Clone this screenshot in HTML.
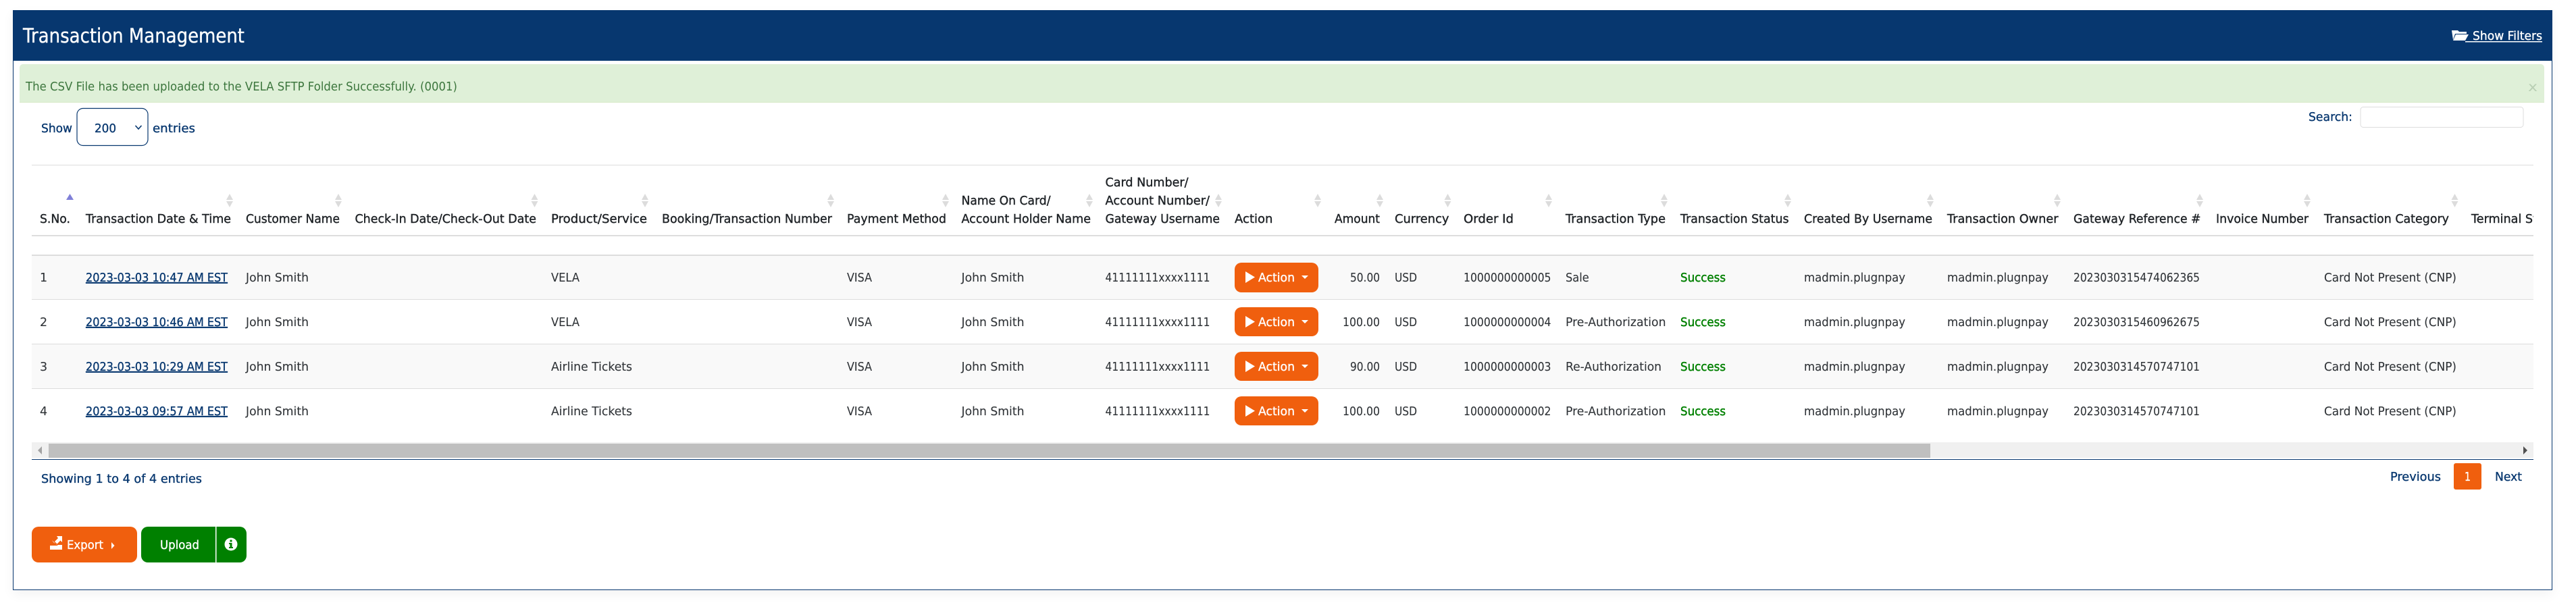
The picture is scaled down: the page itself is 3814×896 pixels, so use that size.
<!DOCTYPE html>
<html lang="en">
<head>
<meta charset="utf-8">
<title>Transaction Management</title>
<style>
html,body{margin:0;padding:0;background:#fff;width:3814px;height:896px;overflow:hidden}
#panel{position:absolute;left:19px;top:15px;width:3758px;height:858px;border:1px solid #07376f;border-top:0;box-shadow:0 6px 16px rgba(0,0,0,.05);background:#fff}
svg{position:absolute;left:0;top:0}
text{font-family:"DejaVu Sans","Liberation Sans",sans-serif;font-size:17.5px;white-space:pre}
.h text{fill:#1f2327;stroke:#1f2327;stroke-width:.4}
.d text{fill:#2f3337;stroke:#2f3337;stroke-width:.1}
.n,.d text.n{fill:#07376f;stroke:#07376f;stroke-width:.35}
.w{fill:#fff;stroke:#fff;stroke-width:.35}
.g,.d text.g{fill:#008000;stroke:#008000;stroke-width:.45}
</style>
</head>
<body>
<div id="panel"></div>
<svg width="3814" height="896" viewBox="0 0 3814 896" xmlns="http://www.w3.org/2000/svg">
<defs><clipPath id="c"><rect x="47" y="244" width="3704" height="420"/></clipPath></defs>

<!-- header bar -->
<rect x="19" y="15" width="3760" height="75" fill="#07376f"/>
<text class="w" x="34" y="63" style="font-size:29px" textLength="328" lengthAdjust="spacingAndGlyphs">Transaction Management</text>
<path d="M3630 45h9l2 2h11v3h-17l-3 9zM3636 51h19l-5 9h-18z" fill="#fff"/>
<text class="w" x="3661" y="59" textLength="103" lengthAdjust="spacingAndGlyphs">Show Filters</text>
<rect x="3650" y="61" width="114" height="1.5" fill="#fff"/>

<!-- alert -->
<path d="M29 152V100a5 5 0 0 1 5-5H3762a5 5 0 0 1 5 5V152z" fill="#dff0d8"/>
<rect x="29" y="151" width="3738" height="1" fill="#d6e9c6"/>
<text x="38" y="134" fill="#3c763d" textLength="639" lengthAdjust="spacingAndGlyphs">The CSV File has been uploaded to the VELA SFTP Folder Successfully. (0001)</text>
<text x="3743" y="135" fill="#b9cfb4" style="font-size:19px" textLength="14" lengthAdjust="spacingAndGlyphs">x</text>

<!-- length & search -->
<text class="n" x="61" y="196" textLength="46" lengthAdjust="spacingAndGlyphs">Show</text>
<rect x="114" y="160.500" width="105" height="55" rx="9" fill="#fff" stroke="#07376f" stroke-width="1.200"/>
<text class="n" x="140" y="196" textLength="32" lengthAdjust="spacingAndGlyphs">200</text>
<path d="M200.500 186l4.500 5 4.500-5" fill="none" stroke="#07376f" stroke-width="1.600"/>
<text class="n" x="226" y="196" textLength="63" lengthAdjust="spacingAndGlyphs">entries</text>
<text class="n" x="3418" y="179" textLength="65" lengthAdjust="spacingAndGlyphs">Search:</text>
<rect x="3495" y="158.500" width="241" height="30" rx="4" fill="#fff" stroke="#ddd"/>

<!-- table rules and stripes -->
<rect x="47" y="379" width="3704" height="64" fill="#f9f9f9"/>
<rect x="47" y="509" width="3704" height="66" fill="#f9f9f9"/>
<rect x="47" y="244" width="3704" height="1" fill="#ddd"/>
<rect x="47" y="348" width="3704" height="2" fill="#ddd"/>
<rect x="47" y="377" width="3704" height="2" fill="#ddd"/>
<rect x="47" y="443" width="3704" height="1" fill="#ddd"/>
<rect x="47" y="509" width="3704" height="1" fill="#ddd"/>
<rect x="47" y="575" width="3704" height="1" fill="#ddd"/>

<!-- sort arrows -->
<path fill="#dcdcdc" d="
M340 287l5 9h-10zM340 307l5-9h-10z
M501 287l5 9h-10zM501 307l5-9h-10z
M791.500 287l5 9h-10zM791.500 307l5-9h-10z
M955 287l5 9h-10zM955 307l5-9h-10z
M1230 287l5 9h-10zM1230 307l5-9h-10z
M1400 287l5 9h-10zM1400 307l5-9h-10z
M1613 287l5 9h-10zM1613 307l5-9h-10z
M1804 287l5 9h-10zM1804 307l5-9h-10z
M1951 287l5 9h-10zM1951 307l5-9h-10z
M2043 287l5 9h-10zM2043 307l5-9h-10z
M2143.500 287l5 9h-10zM2143.500 307l5-9h-10z
M2293 287l5 9h-10zM2293 307l5-9h-10z
M2464 287l5 9h-10zM2464 307l5-9h-10z
M2647 287l5 9h-10zM2647 307l5-9h-10z
M2858 287l5 9h-10zM2858 307l5-9h-10z
M3046 287l5 9h-10zM3046 307l5-9h-10z
M3257 287l5 9h-10zM3257 307l5-9h-10z
M3416 287l5 9h-10zM3416 307l5-9h-10z
M3634.500 287l5 9h-10zM3634.500 307l5-9h-10z"/>
<path d="M103.500 287l5.500 9h-11z" fill="#8080d8"/>

<!-- table headings -->
<g class="h" clip-path="url(#c)">
<text x="59" y="330" textLength="45" lengthAdjust="spacingAndGlyphs">S.No.</text>
<text x="127" y="330" textLength="215" lengthAdjust="spacingAndGlyphs">Transaction Date &amp; Time</text>
<text x="364" y="330" textLength="139" lengthAdjust="spacingAndGlyphs">Customer Name</text>
<text x="525.500" y="330" textLength="268.500" lengthAdjust="spacingAndGlyphs">Check-In Date/Check-Out Date</text>
<text x="816" y="330" textLength="142" lengthAdjust="spacingAndGlyphs">Product/Service</text>
<text x="980" y="330" textLength="252" lengthAdjust="spacingAndGlyphs">Booking/Transaction Number</text>
<text x="1254" y="330" textLength="147" lengthAdjust="spacingAndGlyphs">Payment Method</text>
<text x="1423.500" y="303" textLength="132" lengthAdjust="spacingAndGlyphs">Name On Card/</text>
<text x="1423.500" y="330" textLength="191.500" lengthAdjust="spacingAndGlyphs">Account Holder Name</text>
<text x="1636.500" y="276" textLength="123" lengthAdjust="spacingAndGlyphs">Card Number/</text>
<text x="1636.500" y="303" textLength="154.500" lengthAdjust="spacingAndGlyphs">Account Number/</text>
<text x="1636.500" y="330" textLength="169.500" lengthAdjust="spacingAndGlyphs">Gateway Username</text>
<text x="1828" y="330" textLength="56.500" lengthAdjust="spacingAndGlyphs">Action</text>
<text x="1976" y="330" textLength="67" lengthAdjust="spacingAndGlyphs">Amount</text>
<text x="2065" y="330" textLength="80.500" lengthAdjust="spacingAndGlyphs">Currency</text>
<text x="2167" y="330" textLength="74" lengthAdjust="spacingAndGlyphs">Order Id</text>
<text x="2318" y="330" textLength="148" lengthAdjust="spacingAndGlyphs">Transaction Type</text>
<text x="2488" y="330" textLength="160.600" lengthAdjust="spacingAndGlyphs">Transaction Status</text>
<text x="2671" y="330" textLength="190" lengthAdjust="spacingAndGlyphs">Created By Username</text>
<text x="2883" y="330" textLength="164.500" lengthAdjust="spacingAndGlyphs">Transaction Owner</text>
<text x="3070" y="330" textLength="188.500" lengthAdjust="spacingAndGlyphs">Gateway Reference #</text>
<text x="3281" y="330" textLength="137" lengthAdjust="spacingAndGlyphs">Invoice Number</text>
<text x="3441" y="330" textLength="185" lengthAdjust="spacingAndGlyphs">Transaction Category</text>
<text x="3659" y="330" textLength="136" lengthAdjust="spacingAndGlyphs">Terminal Status</text>
</g>

<!-- row 1 -->
<g class="d">
<text x="59" y="417">1</text>
<text class="n" x="127" y="417" textLength="210" lengthAdjust="spacingAndGlyphs" text-decoration="underline">2023-03-03 10:47 AM EST</text>
<text x="364" y="417" textLength="93" lengthAdjust="spacingAndGlyphs">John Smith</text>
<text x="816" y="417" textLength="42" lengthAdjust="spacingAndGlyphs">VELA</text>
<text x="1254" y="417" textLength="37" lengthAdjust="spacingAndGlyphs">VISA</text>
<text x="1423.500" y="417" textLength="93" lengthAdjust="spacingAndGlyphs">John Smith</text>
<text x="1636.500" y="417" textLength="155" lengthAdjust="spacingAndGlyphs">41111111xxxx1111</text>
<text x="1999" y="417" textLength="44" lengthAdjust="spacingAndGlyphs">50.00</text>
<text x="2065" y="417" textLength="33" lengthAdjust="spacingAndGlyphs">USD</text>
<text x="2167" y="417" textLength="129.500" lengthAdjust="spacingAndGlyphs">1000000000005</text>
<text x="2318" y="417" textLength="34.700" lengthAdjust="spacingAndGlyphs">Sale</text>
<text class="g" x="2488" y="417" textLength="67" lengthAdjust="spacingAndGlyphs">Success</text>
<text x="2671" y="417" textLength="150" lengthAdjust="spacingAndGlyphs">madmin.plugnpay</text>
<text x="2883" y="417" textLength="150" lengthAdjust="spacingAndGlyphs">madmin.plugnpay</text>
<text x="3070" y="417" textLength="187" lengthAdjust="spacingAndGlyphs">2023030315474062365</text>
<text x="3441" y="417" textLength="196" lengthAdjust="spacingAndGlyphs">Card Not Present (CNP)</text>
</g>
<!-- row 2 -->
<g class="d">
<text x="59" y="483">2</text>
<text class="n" x="127" y="483" textLength="210" lengthAdjust="spacingAndGlyphs" text-decoration="underline">2023-03-03 10:46 AM EST</text>
<text x="364" y="483" textLength="93" lengthAdjust="spacingAndGlyphs">John Smith</text>
<text x="816" y="483" textLength="42" lengthAdjust="spacingAndGlyphs">VELA</text>
<text x="1254" y="483" textLength="37" lengthAdjust="spacingAndGlyphs">VISA</text>
<text x="1423.500" y="483" textLength="93" lengthAdjust="spacingAndGlyphs">John Smith</text>
<text x="1636.500" y="483" textLength="155" lengthAdjust="spacingAndGlyphs">41111111xxxx1111</text>
<text x="1988" y="483" textLength="55" lengthAdjust="spacingAndGlyphs">100.00</text>
<text x="2065" y="483" textLength="33" lengthAdjust="spacingAndGlyphs">USD</text>
<text x="2167" y="483" textLength="129.500" lengthAdjust="spacingAndGlyphs">1000000000004</text>
<text x="2318" y="483" textLength="148.500" lengthAdjust="spacingAndGlyphs">Pre-Authorization</text>
<text class="g" x="2488" y="483" textLength="67" lengthAdjust="spacingAndGlyphs">Success</text>
<text x="2671" y="483" textLength="150" lengthAdjust="spacingAndGlyphs">madmin.plugnpay</text>
<text x="2883" y="483" textLength="150" lengthAdjust="spacingAndGlyphs">madmin.plugnpay</text>
<text x="3070" y="483" textLength="187" lengthAdjust="spacingAndGlyphs">2023030315460962675</text>
<text x="3441" y="483" textLength="196" lengthAdjust="spacingAndGlyphs">Card Not Present (CNP)</text>
</g>
<!-- row 3 -->
<g class="d">
<text x="59" y="549">3</text>
<text class="n" x="127" y="549" textLength="210" lengthAdjust="spacingAndGlyphs" text-decoration="underline">2023-03-03 10:29 AM EST</text>
<text x="364" y="549" textLength="93" lengthAdjust="spacingAndGlyphs">John Smith</text>
<text x="816" y="549" textLength="120" lengthAdjust="spacingAndGlyphs">Airline Tickets</text>
<text x="1254" y="549" textLength="37" lengthAdjust="spacingAndGlyphs">VISA</text>
<text x="1423.500" y="549" textLength="93" lengthAdjust="spacingAndGlyphs">John Smith</text>
<text x="1636.500" y="549" textLength="155" lengthAdjust="spacingAndGlyphs">41111111xxxx1111</text>
<text x="1999" y="549" textLength="44" lengthAdjust="spacingAndGlyphs">90.00</text>
<text x="2065" y="549" textLength="33" lengthAdjust="spacingAndGlyphs">USD</text>
<text x="2167" y="549" textLength="129.500" lengthAdjust="spacingAndGlyphs">1000000000003</text>
<text x="2318" y="549" textLength="142" lengthAdjust="spacingAndGlyphs">Re-Authorization</text>
<text class="g" x="2488" y="549" textLength="67" lengthAdjust="spacingAndGlyphs">Success</text>
<text x="2671" y="549" textLength="150" lengthAdjust="spacingAndGlyphs">madmin.plugnpay</text>
<text x="2883" y="549" textLength="150" lengthAdjust="spacingAndGlyphs">madmin.plugnpay</text>
<text x="3070" y="549" textLength="187" lengthAdjust="spacingAndGlyphs">2023030314570747101</text>
<text x="3441" y="549" textLength="196" lengthAdjust="spacingAndGlyphs">Card Not Present (CNP)</text>
</g>
<!-- row 4 -->
<g class="d">
<text x="59" y="615">4</text>
<text class="n" x="127" y="615" textLength="210" lengthAdjust="spacingAndGlyphs" text-decoration="underline">2023-03-03 09:57 AM EST</text>
<text x="364" y="615" textLength="93" lengthAdjust="spacingAndGlyphs">John Smith</text>
<text x="816" y="615" textLength="120" lengthAdjust="spacingAndGlyphs">Airline Tickets</text>
<text x="1254" y="615" textLength="37" lengthAdjust="spacingAndGlyphs">VISA</text>
<text x="1423.500" y="615" textLength="93" lengthAdjust="spacingAndGlyphs">John Smith</text>
<text x="1636.500" y="615" textLength="155" lengthAdjust="spacingAndGlyphs">41111111xxxx1111</text>
<text x="1988" y="615" textLength="55" lengthAdjust="spacingAndGlyphs">100.00</text>
<text x="2065" y="615" textLength="33" lengthAdjust="spacingAndGlyphs">USD</text>
<text x="2167" y="615" textLength="129.500" lengthAdjust="spacingAndGlyphs">1000000000002</text>
<text x="2318" y="615" textLength="148.500" lengthAdjust="spacingAndGlyphs">Pre-Authorization</text>
<text class="g" x="2488" y="615" textLength="67" lengthAdjust="spacingAndGlyphs">Success</text>
<text x="2671" y="615" textLength="150" lengthAdjust="spacingAndGlyphs">madmin.plugnpay</text>
<text x="2883" y="615" textLength="150" lengthAdjust="spacingAndGlyphs">madmin.plugnpay</text>
<text x="3070" y="615" textLength="187" lengthAdjust="spacingAndGlyphs">2023030314570747101</text>
<text x="3441" y="615" textLength="196" lengthAdjust="spacingAndGlyphs">Card Not Present (CNP)</text>
</g>

<!-- action buttons -->
<rect x="1828" y="389" width="124" height="44" rx="10" fill="#f05f0e"/>
<path d="M1844 402l14 8.500-14 8.500zM1927 408h10l-5 5z" fill="#fff"/>
<text class="w" x="1863" y="417" textLength="54" lengthAdjust="spacingAndGlyphs">Action</text>
<rect x="1828" y="455" width="124" height="43" rx="10" fill="#f05f0e"/>
<path d="M1844 468l14 8.500-14 8.500zM1927 474h10l-5 5z" fill="#fff"/>
<text class="w" x="1863" y="483" textLength="54" lengthAdjust="spacingAndGlyphs">Action</text>
<rect x="1828" y="521" width="124" height="43" rx="10" fill="#f05f0e"/>
<path d="M1844 534l14 8.500-14 8.500zM1927 540h10l-5 5z" fill="#fff"/>
<text class="w" x="1863" y="549" textLength="54" lengthAdjust="spacingAndGlyphs">Action</text>
<rect x="1828" y="587" width="124" height="43" rx="10" fill="#f05f0e"/>
<path d="M1844 600l14 8.500-14 8.500zM1927 606h10l-5 5z" fill="#fff"/>
<text class="w" x="1863" y="615" textLength="54" lengthAdjust="spacingAndGlyphs">Action</text>

<!-- scrollbar -->
<rect x="47" y="655" width="3704" height="23" fill="#f0f0f0"/>
<rect x="72" y="657" width="2786" height="21" fill="#bfbfbf"/>
<path d="M3736 661v12l6-6z" fill="#505050"/>
<path d="M62 661v12l-6-6z" fill="#a3a3a3"/>
<rect x="47" y="680" width="3704" height="1" fill="#07376f"/>

<!-- footer of table -->
<text class="n" x="61" y="715" textLength="238" lengthAdjust="spacingAndGlyphs">Showing 1 to 4 of 4 entries</text>
<text class="n" x="3539" y="712" textLength="75" lengthAdjust="spacingAndGlyphs">Previous</text>
<rect x="3633" y="686" width="41" height="39" rx="3" fill="#f05f0e"/>
<text class="w" x="3649" y="712" textLength="9" lengthAdjust="spacingAndGlyphs">1</text>
<text class="n" x="3694" y="712" textLength="40" lengthAdjust="spacingAndGlyphs">Next</text>

<!-- bottom buttons -->
<rect x="47" y="780" width="156" height="53" rx="10" fill="#f05f0e"/>
<path d="M84 794h8v9l-2.500-2.500-5 5-3.500-3.500 5-5zM77 800l7 7h8v3H74v-2h12l-7-5zM74 810h18v4H74z" fill="#fff"/>
<text class="w" x="99" y="813" textLength="54" lengthAdjust="spacingAndGlyphs">Export</text>
<path d="M165 803l4.500 5-4.500 5z" fill="#fff"/>
<path d="M219 780h100v53H219a10 10 0 0 1-10-10V790a10 10 0 0 1 10-10z" fill="#008000"/>
<text class="w" x="237" y="813" textLength="58" lengthAdjust="spacingAndGlyphs">Upload</text>
<path d="M320.500 780h34.500a10 10 0 0 1 10 10v33a10 10 0 0 1-10 10h-34.500z" fill="#008000"/>
<circle cx="342" cy="806" r="9.500" fill="#fff"/>
<path d="M340.500 799.500h3v3h-3zM339 804h4.500v6h1.500v2h-6v-2h1.500v-4H339z" fill="#008000"/>
</svg>
</body>
</html>
